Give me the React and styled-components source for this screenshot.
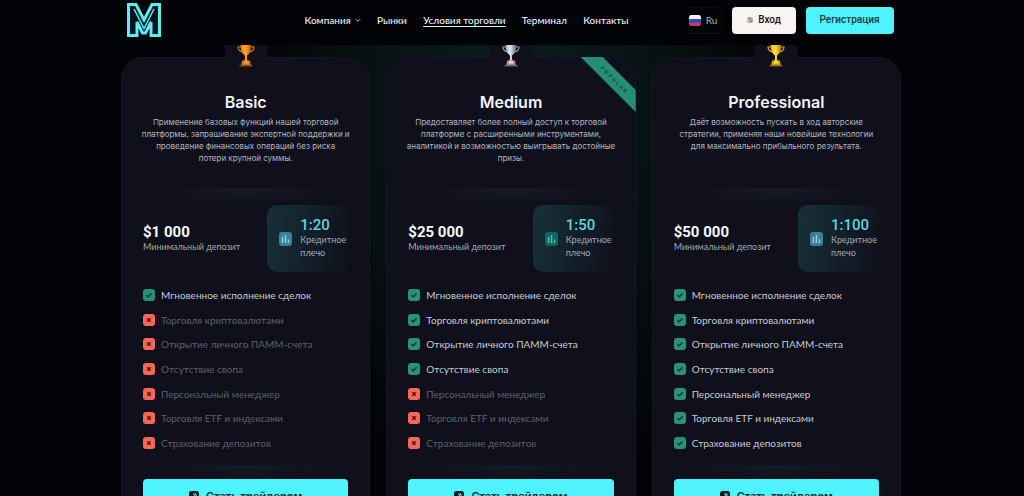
import React from "react";
import styled, { createGlobalStyle } from "styled-components";

const GlobalStyle = createGlobalStyle`
  *, *::before, *::after { box-sizing: border-box; }
  html { scrollbar-width: none; background: #020308; }
  body {
    margin: 0;
    color: #f3f4f8;
    font-family: Lato, "Liberation Sans", sans-serif;
    font-size: 10px;
    line-height: 12px;
  }
  h2, p, ul, dl, dd { margin: 0; padding: 0; }
  button { font: inherit; border: 0; padding: 0; cursor: pointer; }
`;

const Page = styled.div`
  min-height: 100vh;
  overflow: hidden;
  padding: 57px 2px 24px 0;
  background: radial-gradient(ellipse 270px 400px at 50% 100px, #0c1d1f 0%, #071112 55%, #020308 100%);
`;

const Header = styled.header`
  position: fixed;
  inset: 0 0 auto 0;
  z-index: 10;
  height: 45px;
  padding-right: 4px;
  background: #020307;
`;

const HeaderInner = styled.div`
  display: flex;
  align-items: center;
  max-width: 767px;
  height: 40px;
  margin: 0 auto;
`;

const Logo = styled.a`
  display: flex;
  margin-right: auto;
`;

const Nav = styled.nav`
  display: flex;
  justify-content: space-between;
  width: 324px;
  margin-right: 56px;
`;

const NavLink = styled.a`
  display: flex;
  align-items: center;
  gap: 4px;
  color: #eceef2;
  font-weight: 500;
  text-decoration: ${(p) => (p.$current ? "underline" : "none")};
  text-underline-offset: 2px;
`;

const Actions = styled.div`
  display: flex;
  align-items: center;
`;

const HeaderButton = styled.button`
  display: flex;
  align-items: center;
  justify-content: center;
  gap: 4px;
  width: ${(p) => p.$width}px;
  height: 27px;
  margin-left: 10px;
  border-radius: 4px;
  background: ${(p) => (p.$primary ? "#4ff3fd" : "#f9f4f2")};
  color: ${(p) => (p.$primary ? "#0b3a44" : "#15161d")};
  font-family: Roboto, sans-serif;
  font-weight: 500;
`;

const LangButton = styled.button`
  display: flex;
  align-items: center;
  justify-content: center;
  gap: 5px;
  width: 37px;
  height: 27px;
  border: 1px solid #0a0b12;
  border-radius: 4px;
  background: #020307;
  color: #a9abb3;
`;

const Plans = styled.main`
  display: grid;
  grid-template-columns: repeat(3, minmax(0, 1fr));
  gap: 16px;
  max-width: 780px;
  margin: 0 auto;
`;

const Card = styled.section`
  position: relative;
  display: flex;
  flex-direction: column;
  padding: 34px 21px 22px;
  border: 1px solid #141622;
  border-radius: 22px;
  background: #0f101b;
`;

const Badge = styled.div`
  position: absolute;
  top: -23px;
  left: 50%;
  display: grid;
  place-items: center;
  width: 42px;
  height: 42px;
  transform: translateX(-50%);
  border-radius: 8px;
  background: #0f101b;
`;

const Ribbon = styled.div`
  position: absolute;
  top: -1px;
  right: -1px;
  display: grid;
  place-items: center;
  width: 55px;
  height: 55px;
  background: #278d77;
  clip-path: polygon(0 0, 22px 0, 100% 33px, 100% 100%);
`;

const RibbonText = styled.span`
  padding: 0 0 15px 2px;
  color: #0c3f3b;
  font-size: 5px;
  font-weight: 700;
  letter-spacing: 2px;
  line-height: 6px;
  transform: rotate(45deg);
`;

const PlanName = styled.h2`
  font-family: Inter, sans-serif;
  font-size: 16px;
  font-weight: 600;
  line-height: 20px;
  text-align: center;
`;

const Description = styled.p`
  display: flex;
  flex-direction: column;
  align-items: center;
  min-height: 76px;
  padding-top: 4px;
  color: #b4b5bd;
  font-family: Inter, sans-serif;
  font-size: 8px;
  white-space: nowrap;
`;

const Divider = styled.div`
  height: ${(p) => p.$height}px;
  background: radial-gradient(ellipse 45% 100% at 50% 0, #151929 0%, #0f101b 100%);
`;

const Terms = styled.div`
  display: flex;
  align-items: center;
  justify-content: space-between;
  height: 67px;
`;

const Amount = styled.strong`
  display: block;
  color: ${(p) => (p.$accent ? "#63d3df" : "#f6f7fa")};
  font-family: Roboto, sans-serif;
  font-size: 15px;
  font-weight: ${(p) => (p.$accent ? 500 : 700)};
  line-height: 15px;
`;

const Label = styled.span`
  display: block;
  color: #a6a7af;
  font-size: 9px;
  line-height: 13px;
`;

const Leverage = styled.div`
  display: flex;
  align-items: center;
  gap: 8px;
  width: 81px;
  height: 67px;
  padding-left: 12px;
  border-radius: 10px;
  background: linear-gradient(100deg, #17303a 0%, #13222c 45%, #0f101b 100%);
`;

const Features = styled.ul`
  display: flex;
  flex-direction: column;
  justify-content: space-between;
  height: 160px;
  margin: 17px 0 16px;
  list-style: none;
`;

const Feature = styled.li`
  display: flex;
  align-items: center;
  gap: 6px;
  color: ${(p) => (p.$on ? "#c9cad0" : "#5e606b")};
`;

const TradeButton = styled.button`
  display: flex;
  align-items: center;
  justify-content: center;
  gap: 7px;
  height: 34px;
  border-radius: 4px;
  background: #4ff3fd;
  color: #0c2a33;
  font-family: Inter, sans-serif;
  font-size: 11px;
  font-weight: 600;
`;

const LogoMark = () => (
  <svg width="34" height="34" viewBox="0 0 34 34" aria-hidden="true">
    <path
      d="M1.500 1.500H9l8 15.500 8-15.500h7.500v31H24V19l-5.500 11h-3L10 19v13.500H1.500z"
      fill="#04141a"
      stroke="#5cecf5"
      strokeWidth="3"
    />
    <path d="M5.500 4v27M28.500 4v27" stroke="#04141a" strokeWidth="1.500" />
    <path d="m7 6 10 19.500L27 6" fill="none" stroke="#5cecf5" strokeWidth="1.500" />
  </svg>
);

const ChevronIcon = () => (
  <svg width="6" height="6" viewBox="0 0 6 6" fill="none" stroke="#c5c7cc" aria-hidden="true">
    <path d="M.7 2 3 4.300 5.300 2" />
  </svg>
);

const FlagIcon = () => (
  <svg width="12" height="11" viewBox="0 0 12 11" aria-hidden="true">
    <clipPath id="flag"><rect width="12" height="11" rx="2.500" /></clipPath>
    <g clipPath="url(#flag)">
      <path fill="#f4f5f9" d="M0 0h12v4H0z" />
      <path fill="#2d50c4" d="M0 4h12v4H0z" />
      <path fill="#d83a45" d="M0 8h12v3H0z" />
    </g>
  </svg>
);

const LoginIcon = () => (
  <svg width="8" height="8" viewBox="0 0 8 8" aria-hidden="true">
    <rect x="1" y="1" width="6" height="6" rx="1.500" fill="#c9c5c4" />
    <path d="M2 2.200h3.500M2.500 2l3 4M6 3v2.800H3" stroke="#77757a" strokeWidth=".8" fill="none" />
  </svg>
);

const cups = {
  bronze: ["#ffa92e", "#e07a10", "#8f4708", "#c9783c"],
  silver: ["#e9ebf2", "#9a9dab", "#5e616f", "#b98a6e"],
  gold: ["#ffe23f", "#e0ac10", "#8f6608", "#d3a017"],
};

const Trophy = ({ kind }) => {
  const [light, mid, dark, base] = cups[kind];
  const id = `cup-${kind}`;
  return (
    <svg width="24" height="24" viewBox="0 0 24 24" aria-hidden="true">
      <linearGradient id={id}>
        <stop offset="0" stopColor={mid} />
        <stop offset=".4" stopColor={light} />
        <stop offset=".75" stopColor={mid} />
        <stop offset="1" stopColor={dark} />
      </linearGradient>
      <path d="M7 3H4c0 3 1.800 4.500 5 5M17 3h3c0 3-1.800 4.500-5 5" fill="none" stroke={mid} strokeWidth="1.200" />
      <path d="M6.500 1h11c0 5-1.500 8.500-4.500 10.500V15l1.200 2H9.800l1.200-2v-3.500C8 9.500 6.500 6 6.500 1z" fill={`url(#${id})`} />
      <path d="M8 16.500h8l.8 4.500H7.200z" fill={base} />
      <path d="M9.800 17.500h4.400v2H9.800z" fill={light} />
      <path d="M5.500 21h13v1.500h-13z" fill={dark} />
    </svg>
  );
};

const ChartIcon = ({ teal }) => (
  <svg width="13" height="14" viewBox="0 0 13 14" aria-hidden="true">
    <rect width="13" height="14" rx="3" fill={teal ? "#12665f" : "#3f7f95"} />
    <path d="M3.500 5v6M6.500 3v8M9.500 7.500V11" stroke={teal ? "#35c9b4" : "#7fd3e4"} strokeWidth="1.500" />
  </svg>
);

const StatusIcon = ({ on }) => (
  <svg width="12" height="12" viewBox="0 0 12 12" fill="none" aria-hidden="true">
    <rect width="12" height="12" rx="3" fill={on ? "#2b8f7a" : "#f4685a"} />
    {on ? (
      <path d="m3.500 6.200 1.800 1.700 3.200-3.500" stroke="#0b2a2c" strokeWidth="1.300" />
    ) : (
      <path d="m4.300 4.300 3.400 3.400m0-3.400L4.300 7.700" stroke="#4a1518" strokeWidth="1.400" />
    )}
  </svg>
);

const TraderIcon = () => (
  <svg width="10" height="10" viewBox="0 0 10 10" aria-hidden="true">
    <rect width="10" height="10" rx="2.500" fill="#0c1a22" />
    <path d="M4 3h3v3M7 3 3.500 6.500" fill="none" stroke="#4ff3fd" />
  </svg>
);

const features = [
  "Мгновенное исполнение сделок",
  "Торговля криптовалютами",
  "Открытие личного ПАММ-счета",
  "Отсутствие свопа",
  "Персональный менеджер",
  "Торговля ETF и индексами",
  "Страхование депозитов",
];

const plans = [
  {
    name: "Basic", cup: "bronze", deposit: "$1 000", leverage: "1:20", included: 1,
    text: [
      "Применение базовых функций нашей торговой",
      "платформы, запрашивание экспертной поддержки и",
      "проведение финансовых операций без риска",
      "потери крупной суммы.",
    ],
  },
  {
    name: "Medium", cup: "silver", deposit: "$25 000", leverage: "1:50", included: 4, popular: true,
    text: [
      "Предоставляет более полный доступ к торговой",
      "платформе с расширенными инструментами,",
      "аналитикой и возможностью выигрывать достойные",
      "призы.",
    ],
  },
  {
    name: "Professional", cup: "gold", deposit: "$50 000", leverage: "1:100", included: 7,
    text: [
      "Даёт возможность пускать в ход авторские",
      "стратегии, применяя наши новейшие технологии",
      "для максимально прибыльного результата.",
    ],
  },
];

const PlanCard = ({ plan }) => (
  <Card>
    {plan.popular && <Ribbon><RibbonText>POPULAR</RibbonText></Ribbon>}
    <Badge><Trophy kind={plan.cup} /></Badge>
    <PlanName>{plan.name}</PlanName>
    <Description>{plan.text.map((line) => <span key={line}>{line}</span>)}</Description>
    <Divider $height={17} />
    <Terms>
      <div>
        <Amount>{plan.deposit}</Amount>
        <Label>Минимальный депозит</Label>
      </div>
      <Leverage>
        <ChartIcon teal={plan.popular} />
        <div>
          <Amount $accent>{plan.leverage}</Amount>
          <Label>Кредитное<br />плечо</Label>
        </div>
      </Leverage>
    </Terms>
    <Features>
      {features.map((name, i) => (
        <Feature key={name} $on={i < plan.included}>
          <StatusIcon on={i < plan.included} />
          {name}
        </Feature>
      ))}
    </Features>
    <Divider $height={14} />
    <TradeButton type="button"><TraderIcon />Стать трейдером</TradeButton>
  </Card>
);

export default function App() {
  return (
    <>
      <GlobalStyle />
      <Header>
        <HeaderInner>
          <Logo href="#" aria-label="M"><LogoMark /></Logo>
          <Nav>
            <NavLink href="#company">Компания<ChevronIcon /></NavLink>
            <NavLink href="#markets">Рынки</NavLink>
            <NavLink href="#terms" $current>Условия торговли</NavLink>
            <NavLink href="#terminal">Терминал</NavLink>
            <NavLink href="#contacts">Контакты</NavLink>
          </Nav>
          <Actions>
            <LangButton type="button"><FlagIcon />Ru</LangButton>
            <HeaderButton type="button" $width={64}><LoginIcon />Вход</HeaderButton>
            <HeaderButton type="button" $width={88} $primary>Регистрация</HeaderButton>
          </Actions>
        </HeaderInner>
      </Header>
      <Page>
        <Plans>
          {plans.map((plan) => <PlanCard key={plan.name} plan={plan} />)}
        </Plans>
      </Page>
    </>
  );
}
